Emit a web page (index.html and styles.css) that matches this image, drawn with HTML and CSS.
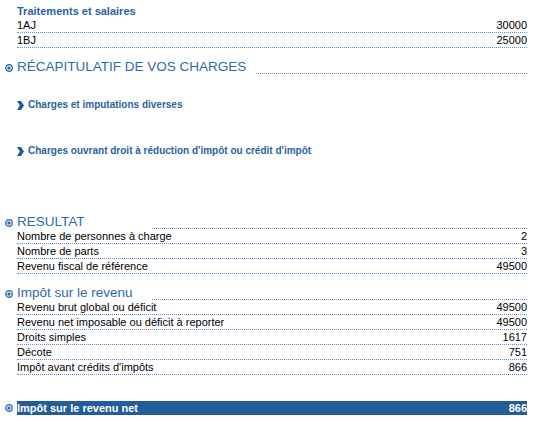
FILE: index.html
```html
<!DOCTYPE html>
<html lang="fr">
<head>
<meta charset="utf-8">
<link rel="stylesheet" href="styles.css">
</head>
<body>
<div class="page">
  <div class="subtitle">Traitements et salaires</div>
  <div class="row"><span>1AJ</span><span>30000</span></div>
  <div class="row"><span>1BJ</span><span>25000</span></div>

  <div class="section sec-recap">
    <svg class="bullet" viewBox="0 0 8 8"><circle cx="4" cy="4" r="3.3" fill="#dfe8f3" stroke="#2b65a3" stroke-width="1.2"/><circle cx="4" cy="4" r="1.6" fill="#2b65a3"/></svg>
    <span class="sec-title">RÉCAPITULATIF DE VOS CHARGES</span>
    <span class="filler"></span>
  </div>

  <div class="link link1"><svg class="chev" viewBox="0 0 7 9"><path d="M0 0 L4 0 L7 4.5 L4 9 L0 9 L2.8 4.5 Z" fill="#1f5b99"/></svg><span>Charges et imputations diverses</span></div>
  <div class="link link2"><svg class="chev" viewBox="0 0 7 9"><path d="M0 0 L4 0 L7 4.5 L4 9 L0 9 L2.8 4.5 Z" fill="#1f5b99"/></svg><span>Charges ouvrant droit à réduction d'impôt ou crédit d'impôt</span></div>

  <div class="section sec-result">
    <svg class="bullet" viewBox="0 0 8 8"><circle cx="4" cy="4" r="3.3" fill="#dfe8f3" stroke="#2b65a3" stroke-width="1.2"/><circle cx="4" cy="4" r="1.6" fill="#2b65a3"/></svg>
    <span class="sec-title">RESULTAT</span>
    <span class="filler"></span>
  </div>
  <div class="row"><span>Nombre de personnes à charge</span><span>2</span></div>
  <div class="row"><span>Nombre de parts</span><span>3</span></div>
  <div class="row"><span>Revenu fiscal de référence</span><span>49500</span></div>

  <div class="section sec-impot">
    <svg class="bullet" viewBox="0 0 8 8"><circle cx="4" cy="4" r="3.3" fill="#dfe8f3" stroke="#2b65a3" stroke-width="1.2"/><circle cx="4" cy="4" r="1.6" fill="#2b65a3"/></svg>
    <span class="sec-title">Impôt sur le revenu</span>
    <span class="filler"></span>
  </div>
  <div class="row"><span>Revenu brut global ou déficit</span><span>49500</span></div>
  <div class="row"><span>Revenu net imposable ou déficit à reporter</span><span>49500</span></div>
  <div class="row"><span>Droits simples</span><span>1617</span></div>
  <div class="row"><span>Décote</span><span>751</span></div>
  <div class="row"><span>Impôt avant crédits d'impôts</span><span>866</span></div>

  <div class="total">
    <svg class="bullet" viewBox="0 0 8 8"><circle cx="4" cy="4" r="3.3" fill="#dfe8f3" stroke="#2b65a3" stroke-width="1.2"/><circle cx="4" cy="4" r="1.6" fill="#2b65a3"/></svg>
    <div class="total-bar"><span>Impôt sur le revenu net</span><span>866</span></div>
  </div>
</div>
</body>
</html>
```
FILE: styles.css
```css
html, body {
  margin: 0;
  padding: 0;
  background: #ffffff;
}
body {
  font-family: "Liberation Sans", Arial, sans-serif;
  color: #000;
}
.page {
  padding: 4px 6px 0 17px;
}
.subtitle {
  font-size: 11px;
  font-weight: bold;
  color: #2a62a0;
  line-height: 14px;
}
.row {
  display: flex;
  justify-content: space-between;
  font-size: 11px;
  line-height: 14px;
  border-bottom: 1px dotted #5d93cc;
}
.section {
  display: flex;
  align-items: flex-end;
  position: relative;
  height: 15px;
}
.bullet {
  width: 8px;
  height: 8px;
  position: absolute;
  left: -12px;
}
.section .bullet {
  top: 5px;
}
.sec-title {
  font-size: 13.5px;
  line-height: 15px;
  color: #3069a9;
  min-width: 125px;
  padding-right: 10px;
  white-space: nowrap;
}
.filler {
  flex: 1;
  border-bottom: 1px dotted #5d93cc;
  height: 1px;
}
.sec-recap {
  margin-top: 11px;
}
.link {
  display: flex;
  align-items: center;
  font-size: 10px;
  font-weight: bold;
  color: #2a62a0;
  line-height: 12px;
}
.chev {
  width: 7px;
  height: 9px;
  margin-right: 4px;
}
.link1 {
  margin-top: 25px;
}
.link2 {
  margin-top: 34px;
}
.sec-result {
  margin-top: 57px;
}
.sec-impot {
  margin-top: 11px;
}
.total {
  position: relative;
  margin-top: 26px;
}
.total .bullet {
  top: 3px;
}
.total-bar {
  display: flex;
  justify-content: space-between;
  background: #225d99;
  color: #fff;
  font-size: 11px;
  font-weight: bold;
  line-height: 14px;
}
```
